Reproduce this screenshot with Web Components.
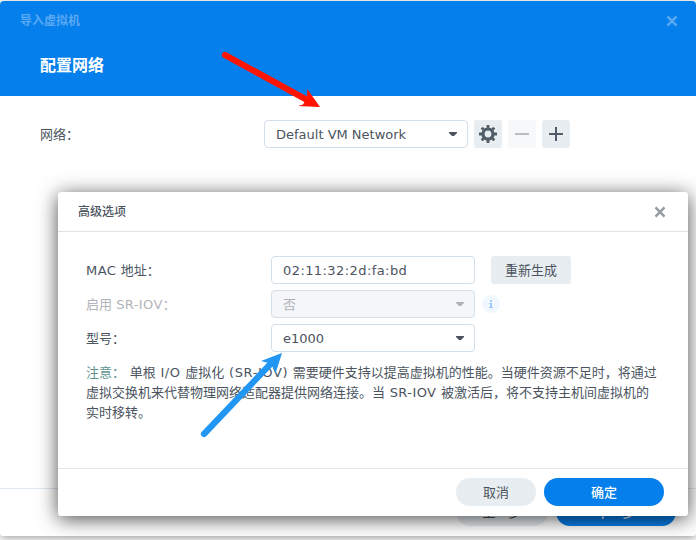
<!DOCTYPE html>
<html lang="zh-CN">
<head>
<meta charset="utf-8">
<title>导入虚拟机</title>
<style>
html,body{margin:0;height:100%;overflow:hidden;background:#fff}
body{font:13px/20px "DejaVu Sans","Noto Sans CJK SC",sans-serif;color:#4b545e}
</style>
</head>
<body>
<vm-app></vm-app>
<script>
const define = (name, html) => customElements.define(name, class extends HTMLElement {
  constructor() {
    super();
    this.attachShadow({mode: 'open'}).innerHTML = html;
  }
});

define('close-icon', `<style>:host{display:block;width:12px;height:12px}svg{display:block}</style>
<svg width="12" height="12" viewBox="0 0 12 12"><path d="M1.5 1.3 10.5 10.7M10.500 1.3 1.500 10.7" stroke="currentColor" stroke-width="2.5" fill="none"/></svg>`);

define('ui-button', `<style>
:host{display:flex;align-items:center;justify-content:center;box-sizing:border-box;height:28px;width:80px;padding-top:2px;border-radius:3px;background:#e8edf1;color:#4b545e;flex:none}
:host([pill]){border-radius:14px}
:host([primary]){background:#057feb;color:#fff;font-weight:500;width:120px}
:host([wide]){width:92px}
:host([icon]){width:28px;padding-top:0}
:host([disabled]){background:#f6f8f9;color:#b9bdc2}
</style><slot></slot>`);

define('ui-field', `<style>
:host{display:flex;align-items:center;justify-content:space-between;box-sizing:border-box;width:204px;height:28px;border:1px solid #d3dfe9;border-radius:4px;padding:0 10px 0 11px;background:#fff;flex:none}
:host([disabled]){background:#f4f6fa;color:#afb3b8}
.t{padding-top:2px}
svg{display:none}
:host([select]) svg{display:block}
</style><span class="t"><slot></slot></span><svg width="8" height="4" viewBox="0 0 8 4"><path d="M0 0H8V1L5 4H3L0 1Z" fill="currentColor"/></svg>`);

define('form-row', `<style>
:host{display:grid;grid-template-columns:var(--label,185px) auto;height:28px;align-items:center;justify-content:start}
:host([disabled]) .l{color:#b1b5ba}
.l{padding-top:2px}
.c{display:flex;align-items:center}
</style><div class="l"><slot name="label"></slot></div><div class="c"><slot></slot></div>`);

define('info-badge', `<style>:host{display:block;width:18px;height:18px}svg{display:block}</style>
<svg width="18" height="18"><circle cx="9" cy="9" r="9" fill="#f0f7ff"/><path d="M8 5h2v2H8zM7 8h3v4h1v1H7v-1h1V9H7z" fill="#9fcbf8"/></svg>`);

define('wizard-window', `<style>
:host{display:flex;flex-direction:column;height:535px;background:#fff;border-radius:4px 4px 3px 3px;overflow:hidden;box-shadow:0 2px 8px rgba(0,0,0,.38)}
header{height:95px;box-sizing:border-box;background:#057feb;padding:10px 18px 0 20px;flex:none}
.bar{display:flex;justify-content:space-between;align-items:center;height:20px;color:#59a8f2;font-size:12px;font-weight:700}
.h{margin:22px 0 0 20px;height:26px;line-height:26px;color:#fff;font-size:16px;font-weight:700}
main{flex:1;padding:24px 40px 0}
footer{border-top:1px solid #dfe8f0;display:flex;justify-content:flex-end;gap:8px;padding:9px 20px 0 0;box-sizing:border-box;height:48px}
</style><header><div class="bar"><slot name="title"></slot><close-icon></close-icon></div><div class="h"><slot name="heading"></slot></div></header><main><slot></slot></main><footer><slot name="footer"></slot></footer>`);

define('modal-dialog', `<style>
:host{display:flex;flex-direction:column;box-sizing:border-box;width:630px;height:324px;background:#fff;border-radius:3px;box-shadow:0 3px 20px rgba(0,0,0,.7)}
header{display:flex;justify-content:space-between;align-items:center;height:40px;box-sizing:border-box;border-bottom:1px solid #dfe3e6;padding:0 22px 0 20px;font-size:12px;font-weight:500}
close-icon{color:#969ca3}
main{flex:1;display:flex;flex-direction:column;gap:6px;padding:24px 28px 0}
footer{display:flex;justify-content:flex-end;gap:8px;height:48px;box-sizing:border-box;border-top:1px solid #dfe6ed;padding:9px 24px 0 0}
</style><header><slot name="title"></slot><close-icon></close-icon></header><main><slot></slot></main><footer><slot name="footer"></slot></footer>`);

define('pointer-arrows', `<style>:host{display:block;pointer-events:none}svg{display:block}</style>
<svg width="696" height="540" viewBox="0 0 696 540">
<path d="M225 55 309 101" stroke="#ff1400" stroke-width="6.2" stroke-linecap="round"/><path d="M320 107 307.3 89 307 98 303 104.500 298 106Z" fill="#ff1400"/>
<path d="M204 434 270 364.500" stroke="#2196f3" stroke-width="6.200" stroke-linecap="round"/><path d="M282 353 261 361 268.500 363 273 367.500 275.500 373.500Z" fill="#2196f3"/>
</svg>`);

define('vm-app', `<style>
:host{display:block;position:relative;width:696px;height:540px;padding-top:1px;box-sizing:border-box;overflow:hidden;background:#fff}
modal-dialog{position:absolute;left:58px;top:192px}
pointer-arrows{position:absolute;left:0;top:0}
.net{--label:224px}
.tools{display:flex;gap:6px;margin-left:6px}
.regen{margin-left:16px}
info-badge{margin-left:7px}
.mac{letter-spacing:.42px}
.wide{letter-spacing:.42px}
.paren{letter-spacing:.6px}
.note{margin-top:5px;line-height:20px;white-space:nowrap;word-spacing:.55px}
.note b{font-weight:400;color:#5f9490}
svg{display:block}
</style>
<wizard-window>
 <span slot="title">导入虚拟机</span><span slot="heading">配置网络</span>
 <form-row class="net"><span slot="label">网络：</span><ui-field select>Default VM Network</ui-field>
 <div class="tools">
 <ui-button icon><svg width="18" height="18" viewBox="-9 -9 18 18" fill="none" stroke="#505c68"><circle r="5" stroke-width="3.200"/><path d="M0-6V-9M0 6V9M-6 0H-9M6 0H9M-4.400-4.400-6.300-6.300M4.400-4.400 6.300-6.300M-4.400 4.400-6.300 6.300M4.400 4.400 6.300 6.300" stroke-width="2.8"/></svg></ui-button>
 <ui-button icon disabled><svg width="14" height="14"><path d="M0 7H14" stroke="#b9bdc3" stroke-width="2"/></svg></ui-button>
 <ui-button icon><svg width="14" height="14"><path d="M0 7H14M7 0V14" stroke="#505c68" stroke-width="2"/></svg></ui-button>
 </div></form-row>
 <ui-button slot="footer" pill wide>上一步</ui-button><ui-button slot="footer" pill primary>下一步</ui-button>
</wizard-window>
<modal-dialog>
 <span slot="title">高级选项</span>
 <form-row><span slot="label"><span class="wide">MAC </span>地址：</span><ui-field class="mac">02:11:32:2d:fa:bd</ui-field><ui-button class="regen">重新生成</ui-button></form-row>
 <form-row disabled><span slot="label">启用 <span class="wide">SR-IOV</span>：</span><ui-field select disabled>否</ui-field><info-badge></info-badge></form-row>
 <form-row><span slot="label">型号：</span><ui-field select>e1000</ui-field></form-row>
 <div class="note"><b>注意：</b> 单根 <span class="paren">I/O</span> 虚拟化 <span class="paren">(SR-IOV)</span> 需要硬件支持以提高虚拟机的性能。当硬件资源不足时，将通过<br>虚拟交换机来代替物理网络适配器提供网络连接。当 <span class="wide">SR-IOV</span> 被激活后，将不支持主机间虚拟机的<br>实时移转。</div>
 <ui-button slot="footer" pill>取消</ui-button><ui-button slot="footer" pill primary>确定</ui-button>
</modal-dialog>
<pointer-arrows></pointer-arrows>`);
</script>
</body>
</html>
